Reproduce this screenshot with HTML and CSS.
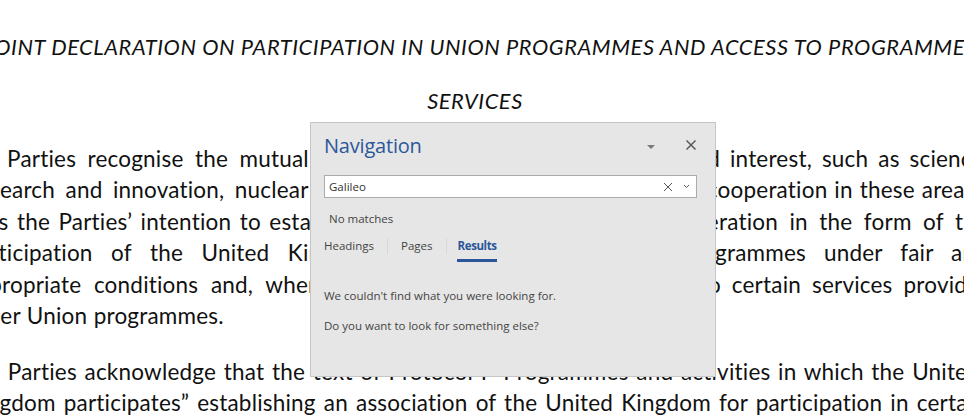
FILE: index.html
```html
<!DOCTYPE html>
<html>
<head>
<meta charset="utf-8">
<link rel="stylesheet" href="styles.css">
</head>
<body>
<div class="doc">
  <div class="title t1">JOINT DECLARATION ON PARTICIPATION IN UNION PROGRAMMES AND ACCESS TO PROGRAMME</div>
  <div class="title t2">SERVICES</div>
  <div class="para">
    <div class="line l1"><span class="a">The Parties recognise the mutual benefits</span><span class="mid">of cooperation in areas of</span><span class="c">shared interest, such as science,</span></div>
    <div class="line l2"><span class="a">research and innovation, nuclear research</span><span class="mid">and space. Mutually beneficial</span><span class="c">cooperation in these areas.</span></div>
    <div class="line l3"><span class="a">It is the Parties’ intention to establish</span><span class="mid">a close and mutually beneficial</span><span class="c">cooperation in the form of the</span></div>
    <div class="line l4"><span class="a">participation of the United Kingdom</span><span class="mid">in Union</span><span class="c">programmes under fair and</span></div>
    <div class="line l5"><span class="a">appropriate conditions and, where</span><span class="mid">applicable, access</span><span class="c">to certain services provided</span></div>
    <div class="line l6"><span class="a">under Union programmes.</span></div>
  </div>
  <div class="para">
    <div class="jline first">The Parties acknowledge that the text of Protocol I “Programmes and activities in which the United</div>
    <div class="jline second">Kingdom participates” establishing an association of the United Kingdom for participation in certain</div>
  </div>
</div>

<div class="nav">
  <div class="nav-head">
    <span class="nav-title">Navigation</span>
    <span class="nav-icons">
      <svg class="ico-tri" width="10" height="6" viewBox="0 0 10 6"><path d="M1 1 L9 1 L5 5 Z" fill="#7a7a7a"/></svg>
      <svg class="ico-close" width="12" height="12" viewBox="0 0 12 12"><path d="M1.5 1.5 L10.5 10.5 M10.5 1.5 L1.5 10.5" stroke="#5a5a5a" stroke-width="1.5" fill="none"/></svg>
    </span>
  </div>
  <div class="search">
    <span class="search-text">Galileo</span>
    <span class="search-icons">
      <svg width="10" height="10" viewBox="0 0 10 10"><path d="M1 1 L9 9 M9 1 L1 9" stroke="#555" stroke-width="1" fill="none"/></svg>
      <svg width="7" height="5" viewBox="0 0 7 5"><path d="M1 1 L3.5 3.5 L6 1" stroke="#555" stroke-width="1" fill="none"/></svg>
    </span>
  </div>
  <div class="nomatch">No matches</div>
  <div class="tabs">
    <span class="tab">Headings</span>
    <span class="sep"></span>
    <span class="tab">Pages</span>
    <span class="sep"></span>
    <span class="tab active">Results</span>
  </div>
  <div class="msg first">We couldn't find what you were looking for.</div>
  <div class="msg">Do you want to look for something else?</div>
</div>
</body>
</html>
```
FILE: styles.css
```css
html, body {
  margin: 0;
  padding: 0;
  background: #ffffff;
  overflow: hidden;
  width: 964px;
  height: 415px;
}

.doc {
  margin-left: -30px;
  width: 1010px;
  padding-top: 30.5px;
  font-family: Lato, "Liberation Sans", sans-serif;
  font-size: 22.5px;
  letter-spacing: 0.2px;
  color: #111;
}

.title {
  font-style: italic;
  font-size: 21.8px;
  letter-spacing: 0.58px;
  line-height: 31.4px;
  height: 31.4px;
  text-align: center;
  white-space: nowrap;
}
.t1 { margin-bottom: 23.6px; margin-left: -30px; margin-right: -30px; }
.t2 { margin-bottom: 26.2px; }

.para {
  margin-bottom: 24.4px;
}

.line {
  display: flex;
  justify-content: space-between;
  white-space: nowrap;
  line-height: 31.4px;
  height: 31.4px;
}
.line .mid {
  flex: 1 1 0;
  min-width: 0;
  overflow: hidden;
  text-align: center;
}
.l1 .a { word-spacing: 5.5px; margin-left: -12.5px; }
.l1 .c { word-spacing: 4px; margin-right: -9px; }
.l2 .a { word-spacing: 4.5px; }
.l2 .c { word-spacing: 1px; }
.l3 .a { word-spacing: 2.5px; }
.l3 .c { word-spacing: 5.5px; margin-right: -8px; }
.l4 .a { word-spacing: 12.5px; margin-left: -4px; }
.l4 .c { word-spacing: 12px; margin-right: -8px; }
.l5 .a { word-spacing: 6.7px; margin-left: -5px; }
.l5 .c { word-spacing: 5px; margin-right: -12px; }
.l6 .a { word-spacing: 0.5px; margin-left: -8px; }

.jline {
  line-height: 31.4px;
  height: 31.4px;
  overflow: hidden;
  text-align: justify;
  text-align-last: justify;
}
.jline.first {
  text-indent: -8px;
}
.jline.second {
  margin-left: -4px;
  margin-right: -6px;
}

.nav {
  position: absolute;
  left: 310px;
  top: 122px;
  width: 406px;
  height: 255px;
  background: #e6e6e6;
  border: 1px solid #c6c6c6;
  font-family: "Open Sans", "Noto Sans", sans-serif;
  color: #444;
  display: flex;
  flex-direction: column;
  padding: 0 19px 0 13px;
  box-sizing: border-box;
}

.nav-head {
  height: 52px;
  display: flex;
  align-items: center;
  justify-content: space-between;
  padding-bottom: 8px;
  box-sizing: border-box;
}
.nav-title {
  font-size: 20px;
  color: #2b579a;
  font-weight: 400;
  letter-spacing: -0.2px;
}
.nav-icons {
  display: flex;
  align-items: center;
  gap: 29px;
  margin-right: -1px;
}
.ico-tri { margin-top: 3px; }

.search {
  height: 23px;
  box-sizing: border-box;
  background: #fff;
  border: 1px solid #ababab;
  display: flex;
  align-items: center;
  justify-content: space-between;
  padding: 0 6px 0 4px;
  width: 373px;
}
.search-text {
  font-size: 11.5px;
  color: #333;
}
.search-icons {
  display: flex;
  align-items: center;
  gap: 10px;
}

.nomatch {
  font-size: 11.5px;
  margin: 13px 0 0 5px;
  height: 16px;
  line-height: 16px;
}

.tabs {
  display: flex;
  align-items: center;
  margin-top: 9px;
  height: 20px;
  font-size: 11.5px;
}
.tab {
  position: relative;
  line-height: 20px;
}
.tab.active {
  color: #2b579a;
  font-weight: 700;
  letter-spacing: -0.4px;
  margin-left: -2px;
}
.tab.active::after {
  content: "";
  position: absolute;
  left: -1px;
  right: 0;
  bottom: -6px;
  height: 3px;
  background: #2b579a;
}
.sep {
  width: 1px;
  height: 16px;
  background: #d8d8d8;
  margin: 0 13px;
}

.msg {
  font-size: 11.5px;
  height: 30px;
  line-height: 16px;
}
.msg.first { margin-top: 32px; }
```
